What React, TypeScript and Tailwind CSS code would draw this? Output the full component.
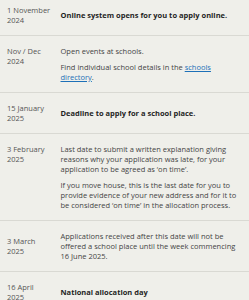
const rows = [
  {
    date: ["1 November", "2024"],
    align: "items-center",
    pad: "pt-[5px] pb-[10px]",
    body: (
      <p className="font-bold text-[#1f1f1f]">Online system opens for you to apply online.</p>
    ),
  },
  {
    date: ["Nov / Dec", "2024"],
    align: "items-start",
    pad: "py-[10px]",
    body: (
      <>
        <p>Open events at schools.</p>
        <p className="mt-[6px]">
          Find individual school details in the{" "}
          <a href="#" className="text-[#1d70b8] underline">
            schools directory
          </a>
          .
        </p>
      </>
    ),
  },
  {
    date: ["15 January", "2025"],
    align: "items-center",
    pad: "py-[10px]",
    body: <p className="font-bold text-[#1f1f1f]">Deadline to apply for a school place.</p>,
  },
  {
    date: ["3 February", "2025"],
    align: "items-start",
    pad: "py-[10px]",
    body: (
      <>
        <p>
          Last date to submit a written explanation giving reasons why your application was late, for your
          application to be agreed as ‘on time’.
        </p>
        <p className="mt-[6px]">
          If you move house, this is the last date for you to provide evidence of your new address and for it to
          be considered ‘on time’ in the allocation process.
        </p>
      </>
    ),
  },
  {
    date: ["3 March", "2025"],
    align: "items-center",
    pad: "py-[10px]",
    body: (
      <p>
        Applications received after this date will not be offered a school place until the week commencing 16
        June 2025.
      </p>
    ),
  },
  {
    date: ["16 April", "2025"],
    align: "items-center",
    pad: "py-[10px]",
    body: <p className="font-bold text-[#1f1f1f]">National allocation day</p>,
  },
];

export default function App() {
  return (
    <div className="w-[249px] h-[300px] overflow-hidden bg-[#efefea] font-['Open_Sans',sans-serif] text-[7.5px] leading-[10px] text-[#444]">
      {rows.map((row, i) => (
        <div key={i} className={`flex ${row.align} ${row.pad} border-b border-[#d9d9d3]`}>
          <div className="w-[60px] shrink-0 pl-[7px] text-[#555]">
            {row.date.map((d) => (
              <div key={d}>{d}</div>
            ))}
          </div>
          <div className="w-[178px] pl-[0.5px]">{row.body}</div>
        </div>
      ))}
    </div>
  );
}
